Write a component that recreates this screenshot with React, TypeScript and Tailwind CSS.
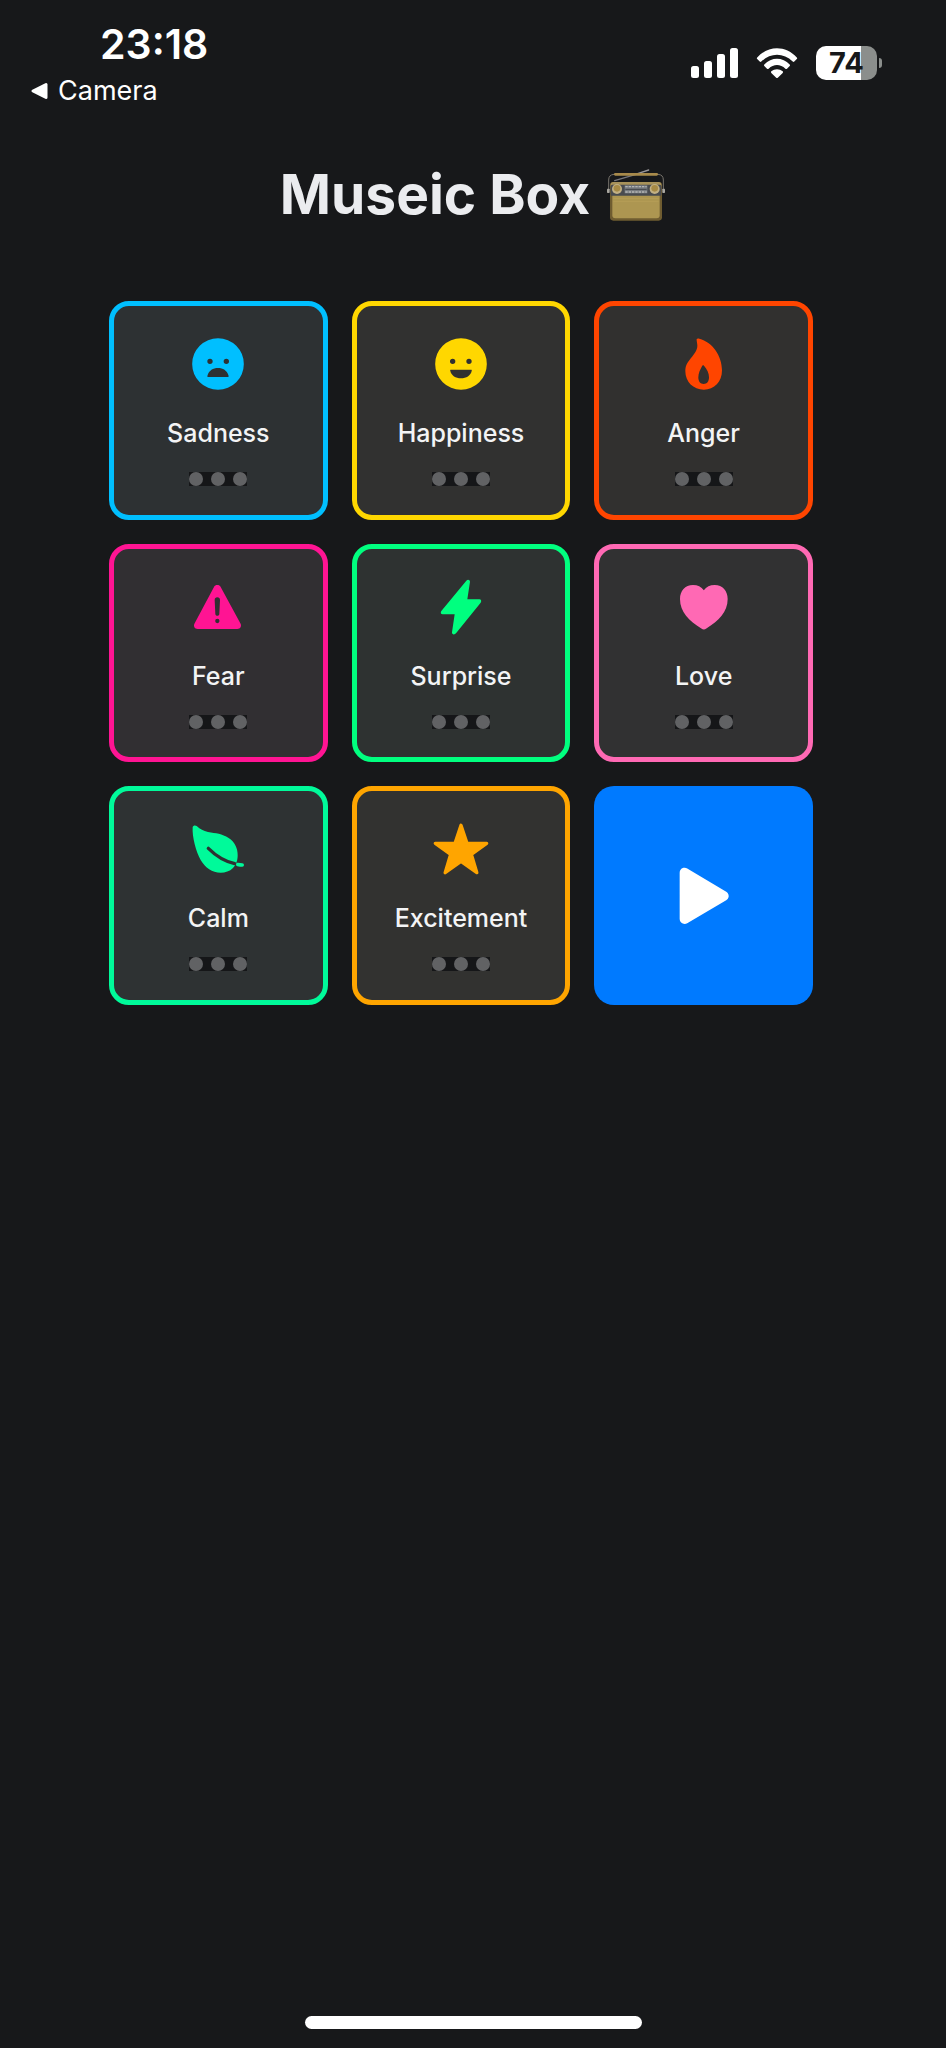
import React from "react";

function SadIcon() {
  return (
    <svg viewBox="0 0 180 180" className="size-[60px] shrink-0 fill-[#00bfff]" aria-hidden="true">
      <path
        fillRule="evenodd"
        d="M90 12.5a77.5 77.5 0 1 0 0 155 77.5 77.5 0 0 0 0-155ZM66 74a8 8 0 1 0 0 16 8 8 0 0 0 0-16ZM115 74a8 8 0 1 0 0 16 8 8 0 0 0 0-16ZM60 129C57 129 58 126 59 123 63 110 75 102 90 102S117 110 121 123C122 126 123 129 120 129Z"
      />
    </svg>
  );
}

function HappyIcon() {
  return (
    <svg viewBox="0 0 180 180" className="size-[60px] shrink-0 fill-[#ffd700]" aria-hidden="true">
      <path
        fillRule="evenodd"
        d="M90 12.5a77.5 77.5 0 1 0 0 155 77.5 77.5 0 0 0 0-155ZM65 74a8 8 0 1 0 0 16 8 8 0 0 0 0-16ZM114 74a8 8 0 1 0 0 16 8 8 0 0 0 0-16ZM60 107H120C123 107 122.5 109 122 111 119 125 106 133 90 133S61 125 58 111C57.5 109 57 107 60 107Z"
      />
    </svg>
  );
}

function FlameIcon() {
  return (
    <svg viewBox="0 0 180 180" className="size-[60px] shrink-0 fill-[#ff4500]" aria-hidden="true">
      <path
        fillRule="evenodd"
        d="M68 19C67 14 70 12 76 14 115 24 144 65 144 109 144 144 121 167 89.5 167 58 167 34 144 34 112 34 97 38 90 46 79 58 63 71 50 70 34 69.5 27 68.5 24 68 19ZM84 97C85 93 88 93 90 95 99 106 105 117 105 130 105 143 99 150 89 150 79 150 73 143 73 130 73 117 79 106 84 97Z"
      />
    </svg>
  );
}

function WarningIcon() {
  return (
    <svg viewBox="0 0 180 180" className="size-[60px] shrink-0 fill-[#ff1493]" aria-hidden="true">
      <path
        fillRule="evenodd"
        d="M78 30C82 22 94 22 98 30L157 139C162 148 157 156 148 156H29C20 156 15 148 20 139ZM80 69C80 64 83 61 88 61S96 64 96 69L94 110C94 114 91 116 88 116S82 114 82 110ZM88 125.5a6.500 6.500 0 1 0 0 13 6.500 6.500 0 0 0 0-13Z"
      />
    </svg>
  );
}

function FlashIcon() {
  return (
    <svg viewBox="0 0 180 180" className="size-[60px] shrink-0 fill-[#00ff7f]" aria-hidden="true">
      <path d="M106 11C110 6 117 8 117 14L109 67H145C151 67 152 73 149 77L75 169C70 175 62 172 63 166L71 112H35C29 112 28 106 31 102Z" />
    </svg>
  );
}

function HeartIcon() {
  return (
    <svg viewBox="0 0 180 180" className="size-[60px] shrink-0 fill-[#ff69b4]" aria-hidden="true">
      <path d="M89.5 40C97 29 108 24 122 24 146 24 161 42 161 66 161 105 134 132 97 154.5 92 158 87 158 82 154.5 45 132 18 105 18 66 18 42 33 24 57 24 71 24 82 29 89.5 40Z" />
    </svg>
  );
}

function LeafIcon() {
  return (
    <svg viewBox="0 0 180 180" className="size-[60px] shrink-0" aria-hidden="true">
      <path
        className="fill-[#00fa9a]"
        d="M14 25C15 19 22 18 26 21 37 31 46 36 60 39 84 43 102 44 122 57 140 69 149 87 149 109 149 122 146 136 135 147 125 157 112 161 98 161 72 161 52 147 38 123 24 99 12 53 14 25Z"
      />
      <path className="fill-none stroke-[#2e3233]" strokeWidth="10" strokeLinecap="round" d="M61 88C83 110 106 126 140 134" />
      <path className="fill-none stroke-[#00fa9a]" strokeWidth="10" strokeLinecap="round" d="M149 136.5C154 137.5 158 138 163 138" />
    </svg>
  );
}

function StarIcon() {
  return (
    <svg viewBox="0 0 180 180" className="size-[60px] shrink-0 fill-[#ffa500] stroke-[#ffa500]" aria-hidden="true">
      <path strokeWidth="10" strokeLinejoin="round" d="M90 19 108 73H167L121 106 137.5 161 90 127.5 42.5 161 59 106 13 73H72Z" />
    </svg>
  );
}

function PlayIcon() {
  return (
    <svg viewBox="0 0 180 180" className="size-[60px] shrink-0 fill-white stroke-white" aria-hidden="true">
      <path strokeWidth="30" strokeLinejoin="round" d="M32 20V159L149 90Z" />
    </svg>
  );
}

function RadioIcon() {
  return (
    <svg viewBox="0 -12 180 180" className="size-[60px] shrink-0" role="img" aria-label="Radio">
      <path d="M26 38 90 19" stroke="#77777c" strokeWidth="4" strokeLinecap="round" />
      <path d="M88 19 128 6" stroke="#99969a" strokeWidth="4" strokeLinecap="round" />
      <path d="M8 72V36Q8 20 24 19H156Q172 20 172 36V72" fill="none" stroke="#77736c" strokeWidth="3" />
      <path d="M28 19H152" stroke="#a88a4b" strokeWidth="8" strokeLinecap="round" />
      <rect x="3" y="62" width="8" height="13" rx="2" fill="#aaa7a0" />
      <rect x="169" y="62" width="8" height="13" rx="2" fill="#aaa7a0" />
      <rect x="12" y="42" width="156" height="116" rx="10" fill="#6f5c30" />
      <rect x="14" y="42" width="152" height="20" rx="8" fill="#a8925a" />
      <rect x="14" y="50" width="152" height="34" rx="5" fill="#494b4f" />
      <path d="M19 83H161V142Q161 151 152 151H28Q19 151 19 142Z" fill="#ad9651" />
      <path d="M22 92H158M22 100H158" stroke="#b9a25a" strokeWidth="2" />
      <rect x="56" y="52" width="68" height="24" fill="#777b80" />
      <path d="M58 56H122M58 72H122" stroke="#b5b6b4" strokeWidth="4" strokeDasharray="7 3" />
      <path d="M58 64H122" stroke="#404348" strokeWidth="3" />
      <circle cx="33" cy="63" r="15" fill="#c2b083" />
      <circle cx="33" cy="61" r="10" fill="#a78a45" />
      <circle cx="146" cy="63" r="15" fill="#c2b083" />
      <circle cx="146" cy="61" r="10" fill="#a78a45" />
    </svg>
  );
}

const emotions = [
  { name: "Sadness", card: "border-[#00bfff] bg-[#2d3133]", Icon: SadIcon },
  { name: "Happiness", card: "border-[#ffd700] bg-[#313130]", Icon: HappyIcon },
  { name: "Anger", card: "border-[#ff4500] bg-[#31302f]", Icon: FlameIcon },
  { name: "Fear", card: "border-[#ff1493] bg-[#312f32]", Icon: WarningIcon },
  { name: "Surprise", card: "border-[#00ff7f] bg-[#2e3231]", Icon: FlashIcon },
  { name: "Love", card: "border-[#ff69b4] bg-[#313132]", Icon: HeartIcon },
  { name: "Calm", card: "border-[#00fa9a] bg-[#2e3233]", Icon: LeafIcon },
  { name: "Excitement", card: "border-[#ffa500] bg-[#323230]", Icon: StarIcon },
];

function Dots() {
  return (
    <span className="flex gap-2 bg-[#151618]" aria-hidden="true">
      <span className="size-[14px] rounded-full bg-[#616264]" />
      <span className="size-[14px] rounded-full bg-[#616264]" />
      <span className="size-[14px] rounded-full bg-[#616264]" />
    </span>
  );
}

function StatusBar() {
  return (
    <header className="flex items-start justify-between pt-5 pr-16 pl-[30px] text-white">
      <div className="flex flex-col">
        <time className="pl-[70px] text-[41px] leading-[48px] font-semibold">23:18</time>
        <a href="#camera" className="flex items-center gap-[10px] pt-[7px] text-[27px] leading-8 font-normal">
          <svg viewBox="0 0 18 20" className="h-5 w-[18px] fill-white stroke-white" aria-hidden="true">
            <path d="M3 10 16 3.5V16.5Z" strokeWidth="3" strokeLinejoin="round" />
          </svg>
          Camera
        </a>
      </div>
      <div className="flex items-center gap-[18px] pt-[26px]">
        <svg viewBox="0 0 47 34" className="h-[34px] w-[47px] fill-white" role="img" aria-label="Signal">
          <rect x="0" y="20" width="8" height="12" rx="2.5" />
          <rect x="13" y="15" width="8" height="17" rx="2.5" />
          <rect x="26" y="8" width="8" height="24" rx="2.5" />
          <rect x="39" y="2" width="8" height="30" rx="2.5" />
        </svg>
        <svg viewBox="0 0 42 34" className="h-[34px] w-[42px] fill-white" role="img" aria-label="Wi-Fi">
          <path d="M1.2 11.4C12.3-.8 29.7-.8 40.8 11.4 41.3 12 41.3 12.6 40.8 13.1L38.3 15.6C37.8 16.1 37.2 16.1 36.7 15.6 27.7 6.5 14.3 6.5 5.3 15.6 4.8 16.1 4.2 16.1 3.7 15.6L1.2 13.1C.7 12.6.7 12 1.2 11.4Z" />
          <path d="M8.3 18.5C15.4 10.9 26.6 10.9 33.7 18.5 34.2 19 34.2 19.6 33.7 20.1L31 22.7C30.5 23.2 29.9 23.2 29.4 22.7 24.4 17.9 17.6 17.9 12.6 22.7 12.1 23.2 11.5 23.2 11 22.7L8.3 20.1C7.8 19.6 7.8 19 8.3 18.5Z" />
          <path d="M15.3 25.3C18.6 22.4 23.4 22.4 26.7 25.3 27.2 25.8 27.2 26.4 26.7 26.9L21.8 31.7C21.3 32.2 20.7 32.2 20.2 31.7L15.3 26.9C14.8 26.4 14.8 25.8 15.3 25.3Z" />
        </svg>
        <div className="flex items-center gap-[2px]">
          <div className="flex h-[34px] w-[61px] items-center justify-center rounded-[10px] bg-linear-to-r from-white from-74% to-[#8b8e8c] to-74% text-[29px] leading-[34px] font-bold text-[#17181a]">
            74
          </div>
          <div className="h-[10px] w-[3px] rounded-r-full bg-[#8b8e8c]" />
        </div>
      </div>
    </header>
  );
}

export default function App() {
  return (
    <div className="flex min-h-screen flex-col bg-[#17181a] font-['Inter','Liberation_Sans',sans-serif]">
      <StatusBar />
      <main className="flex-1 pt-[51px]">
        <h1 className="flex items-center justify-center gap-4 text-[55px] leading-[72px] font-bold text-[#ebecef]">
          Museic Box
          <RadioIcon />
        </h1>
        <div className="grid grid-cols-3 gap-6 pt-[71px] pr-[133px] pl-[109px]">
          {emotions.map(({ name, card, Icon }) => (
            <button
              key={name}
              type="button"
              className={`flex aspect-square flex-col items-center gap-[23px] rounded-[20px] border-5 pt-7 text-[#f3f4f5] ${card}`}
            >
              <Icon />
              <span className="text-[25px] leading-8 font-medium">{name}</span>
              <Dots />
            </button>
          ))}
          <button
            type="button"
            aria-label="Play"
            className="flex aspect-square items-center justify-center rounded-[20px] bg-[#007aff]"
          >
            <PlayIcon />
          </button>
        </div>
      </main>
      <footer className="flex justify-center pb-[19px]">
        <div className="h-[13px] w-[337px] rounded-full bg-white" />
      </footer>
    </div>
  );
}
